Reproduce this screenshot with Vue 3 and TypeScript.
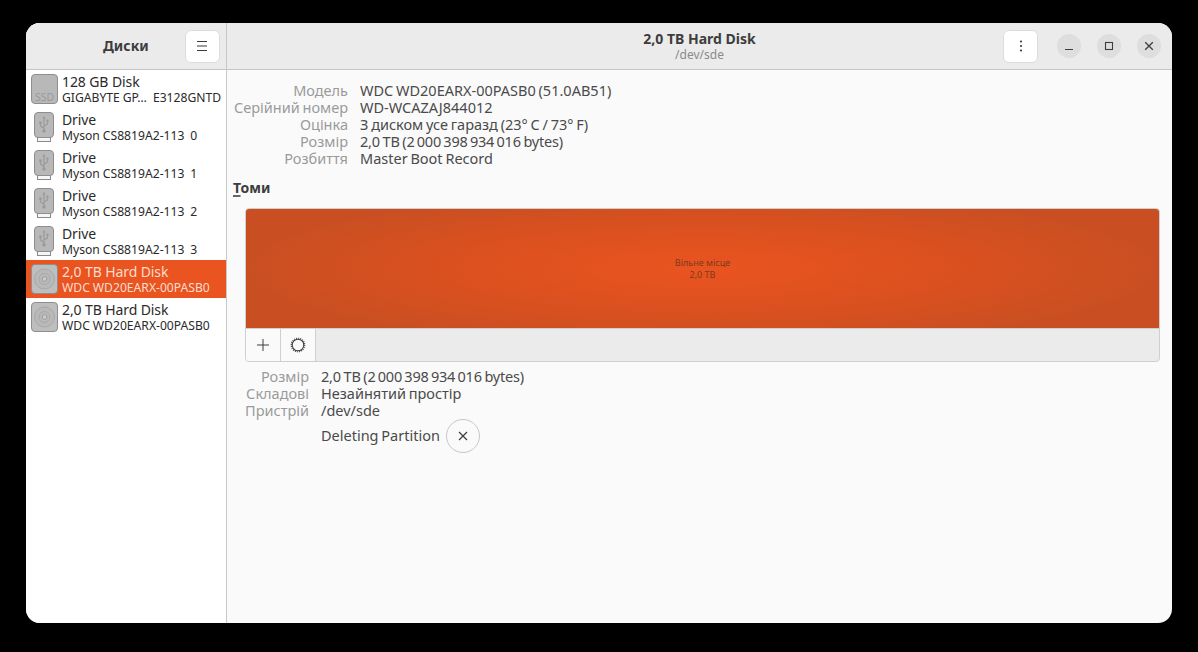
<script setup lang="ts">
interface Disk { title: string; sub: string; kind: 'ssd' | 'usb' | 'hdd'; selected?: boolean }
const disks: Disk[] = [
  { title: '128 GB Disk', sub: 'GIGABYTE GP…  E3128GNTD', kind: 'ssd' },
  { title: 'Drive', sub: 'Myson CS8819A2-113  0', kind: 'usb' },
  { title: 'Drive', sub: 'Myson CS8819A2-113  1', kind: 'usb' },
  { title: 'Drive', sub: 'Myson CS8819A2-113  2', kind: 'usb' },
  { title: 'Drive', sub: 'Myson CS8819A2-113  3', kind: 'usb' },
  { title: '2,0 TB Hard Disk', sub: 'WDC WD20EARX-00PASB0', kind: 'hdd', selected: true },
  { title: '2,0 TB Hard Disk', sub: 'WDC WD20EARX-00PASB0', kind: 'hdd' },
]
const size = '2,0 TB (2\u2009000\u2009398\u2009934\u2009016 bytes)'
const driveInfo = [
  ['Модель', 'WDC WD20EARX-00PASB0 (51.0AB51)'],
  ['Серійний номер', 'WD-WCAZAJ844012'],
  ['Оцінка', 'З диском усе гаразд (23° C / 73° F)'],
  ['Розмір', size],
  ['Розбиття', 'Master Boot Record'],
]
const volInfo = [
  ['Розмір', size],
  ['Складові', 'Незайнятий простір'],
  ['Пристрій', '/dev/sde'],
]
</script>

<template>
  <div class="stage">
    <div class="window">
      <aside class="side">
        <header class="side-head">
          <span class="side-title">Диски</span>
          <button class="btn menu-btn" aria-label="Меню">
            <svg width="16" height="16" viewBox="0 0 16 16"><path d="M3 3.5h10M3 8h10M3 12.5h10" stroke="#3d3d3d" stroke-width="1" fill="none"/></svg>
          </button>
        </header>
        <ul class="list">
          <li v-for="(d, i) in disks" :key="i" class="row" :class="{ selected: d.selected }">
            <div class="icon-slot">
              <svg v-if="d.kind === 'ssd'" width="27" height="30" viewBox="0 0 27 30">
                <rect x="0.5" y="0.5" width="26" height="29" rx="3.5" fill="#b8b8b8" stroke="#8e8e8e"/>
                <text x="13.5" y="26.5" text-anchor="middle" class="ssd-text">SSD</text>
              </svg>
              <svg v-else-if="d.kind === 'usb'" width="20" height="30" viewBox="0 0 20 30">
                <rect x="3.5" y="24" width="13" height="5.5" fill="#f6f6f6" stroke="#8a8a8a"/>
                <rect x="0.5" y="0.5" width="19" height="25" rx="3.5" fill="#b8b8b8" stroke="#8e8e8e"/>
                <path d="M10 6v13M10 16.5l-3.5-2.5V11M10 14l3.5-2V9.5" stroke="#9a9a9a" stroke-width="1.2" fill="none"/>
                <circle cx="10" cy="19" r="1.7" fill="#9a9a9a"/>
                <path d="M8.3 6.5 10 4l1.7 2.5z" fill="#9a9a9a"/>
                <rect x="5.2" y="9.5" width="2.6" height="2" fill="#9a9a9a"/>
                <circle cx="13.5" cy="8.7" r="1.2" fill="#9a9a9a"/>
              </svg>
              <svg v-else width="27" height="30" viewBox="0 0 27 30">
                <rect x="0.5" y="0.5" width="26" height="29" rx="3.5" fill="#bebebe" stroke="#8e8e8e"/>
                <circle cx="13.5" cy="15" r="10" fill="#b9b9b9" stroke="#a8a8a8"/>
                <circle cx="13.5" cy="15" r="5.5" fill="none" stroke="#a8a8a8"/>
                <circle cx="13.5" cy="15" r="2.4" fill="#cbcbcb" stroke="#9c9c9c"/>
              </svg>
            </div>
            <div class="row-text">
              <div class="row-title">{{ d.title }}</div>
              <div class="row-sub">{{ d.sub }}</div>
            </div>
          </li>
        </ul>
      </aside>

      <section class="main">
        <header class="main-head">
          <div class="head-title">
            <div class="t1">2,0 TB Hard Disk</div>
            <div class="t2">/dev/sde</div>
          </div>
          <div class="head-actions">
            <button class="btn dots-btn" aria-label="Дії">
              <svg width="16" height="16" viewBox="0 0 16 16"><g fill="#3d3d3d"><circle cx="8" cy="3.5" r="1.1"/><circle cx="8" cy="8" r="1.1"/><circle cx="8" cy="12.5" r="1.1"/></g></svg>
            </button>
            <div class="wm">
              <span class="wm-btn"><svg width="12" height="12" viewBox="0 0 12 12"><path d="M2 9.5h8" stroke="#3d3d3d" stroke-width="1.2"/></svg></span>
              <span class="wm-btn"><svg width="12" height="12" viewBox="0 0 12 12"><rect x="2.5" y="2.5" width="7" height="7" fill="none" stroke="#3d3d3d" stroke-width="1.1"/></svg></span>
              <span class="wm-btn"><svg width="12" height="12" viewBox="0 0 12 12"><path d="M2.2 2.2l7.6 7.6M9.8 2.2l-7.6 7.6" stroke="#3d3d3d" stroke-width="1.3"/></svg></span>
            </div>
          </div>
        </header>

        <div class="content">
          <dl class="info drive-info">
            <template v-for="r in driveInfo" :key="r[0]">
              <dt>{{ r[0] }}</dt><dd :class="{ tight: r[1] === size }">{{ r[1] }}</dd>
            </template>
          </dl>

          <h2 class="section"><span class="mnemonic">Т</span>оми</h2>

          <div class="volumes">
            <div class="bar">
              <span>Вільне місце</span>
              <span>2,0 TB</span>
            </div>
            <div class="toolbar">
              <button class="tool" aria-label="Додати">
                <svg width="16" height="16" viewBox="0 0 16 16"><path d="M8 2v12M2 8h12" stroke="#3d3d3d" stroke-width="1"/></svg>
              </button>
              <button class="tool" aria-label="Налаштування">
                <svg width="18" height="18" viewBox="0 0 18 18" fill="none" stroke="#3d3d3d">
                  <circle cx="9" cy="9" r="5.8" stroke-width="1.1"/>
                  <circle cx="9" cy="9" r="6.8" stroke-width="1.1" stroke-dasharray="1.1 1.03"/>
                </svg>
              </button>
            </div>
          </div>

          <dl class="info vol-info">
            <template v-for="r in volInfo" :key="r[0]">
              <dt>{{ r[0] }}</dt><dd :class="{ tight: r[1] === size }">{{ r[1] }}</dd>
            </template>
            <dt></dt>
            <dd class="job">
              <span class="job-label">Deleting Partition</span>
              <button class="cancel" aria-label="Скасувати">
                <svg width="10" height="10" viewBox="0 0 10 10"><path d="M1 1l8 8M9 1l-8 8" stroke="#3d3d3d" stroke-width="1.2"/></svg>
              </button>
            </dd>
          </dl>
        </div>
      </section>
    </div>
  </div>
</template>

<style>
html, body { margin: 0; background: #000; }
</style>

<style scoped>
.stage {
  width: 1198px;
  height: 652px;
  padding: 23px 26px 29px;
  box-sizing: border-box;
  background: #000;
  font-family: "Noto Sans", "Open Sans", sans-serif;
  color: #3d3d3d;
}
.window {
  display: flex;
  height: 600px;
  border-radius: 14px;
  overflow: hidden;
  background: #fafafa;
}
.side {
  width: 200px;
  flex: none;
  display: flex;
  flex-direction: column;
  background: #fff;
  border-right: 1px solid #c8c8c8;
}
.side-head, .main-head {
  height: 46px;
  flex: none;
  background: #ebebeb;
  border-bottom: 1px solid #c6c6c6;
  box-sizing: content-box;
}
.side-head {
  display: flex;
  align-items: center;
  padding-left: 77px;
}
.side-title { font-size: 14px; font-weight: 700; color: #3d3d3d; padding-bottom: 2px; }
.btn {
  width: 35px;
  height: 33px;
  padding: 0;
  border: 1px solid #dcdcdc;
  border-radius: 6px;
  background: #fff;
  display: grid;
  place-items: center;
}
.menu-btn { margin-left: 36px; }
.list { list-style: none; margin: 0; padding: 0; }
.row {
  height: 38px;
  display: flex;
  align-items: center;
  color: #2a2a2a;
}
.row.selected { background: #e95420; color: #fbdccd; }
.icon-slot { width: 36px; display: flex; justify-content: center; flex: none; }
.row-title { font-size: 14px; line-height: 17px; letter-spacing: -0.1px; }
.row-sub { font-size: 12.15px; line-height: 15px; white-space: pre; word-spacing: -0.2px; }
.ssd-text { font-size: 10.5px; fill: #9a9a9a; font-family: "Noto Sans", sans-serif; }
.main { flex: 1; display: flex; flex-direction: column; min-width: 0; }
.main-head { display: flex; align-items: center; position: relative; justify-content: flex-end; }
.head-title { position: absolute; left: 0; right: 0; text-align: center; }
.t1 { font-size: 14px; font-weight: 700; line-height: 17px; margin-top: -1px; }
.t2 { font-size: 12px; line-height: 15px; color: #8a8a8a; }
.head-actions { display: flex; align-items: center; position: relative; padding-right: 11px; }
.wm { display: flex; gap: 16px; margin-left: 19px; }
.wm-btn {
  width: 24px; height: 24px; border-radius: 50%;
  background: #dedede; display: grid; place-items: center;
}
.content { padding: 12px 12px 0 6px; }
.info { display: grid; margin: 0; font-size: 14.5px; line-height: 17px; column-gap: 12px; word-spacing: -1px; }
.info dt { text-align: right; color: #9a9a9a; white-space: nowrap; }
.info dd { margin: 0; color: #4a4a4a; }
.info dd.tight { letter-spacing: -0.18px; }
.drive-info { grid-template-columns: 115px 1fr; }
.section { margin: 12px 0 12px; font-size: 14px; line-height: 17px; font-weight: 700; color: #3d3d3d; }
.mnemonic { text-decoration: underline; text-decoration-thickness: 2px; text-underline-offset: 2px; text-decoration-color: #666; }
.volumes {
  margin-left: 12px;
  border: 1px solid #cfcfcf;
  border-radius: 4px;
  overflow: hidden;
  background: #ebebeb;
}
.bar {
  height: 119px;
  box-sizing: border-box;
  display: flex;
  flex-direction: column;
  align-items: center;
  justify-content: center;
  font-size: 9px;
  line-height: 12px;
  color: #7d3a1f;
  background: radial-gradient(ellipse 50% 65% at 50% 50%, #ea5420 0%, #d9501f 60%, #c94f22 100%);
}
.toolbar { display: flex; height: 32px; border-top: 1px solid #cfcfcf; }
.tool {
  width: 35px; padding: 0; border: 0; border-right: 1px solid #cfcfcf;
  background: #fafafa; display: grid; place-items: center;
}
.vol-info { grid-template-columns: 64px 1fr; margin: 6px 0 0 12px; }
.job { display: flex; align-items: center; gap: 6px; height: 34px; }
.job-label { padding-bottom: 2px; }
.cancel {
  width: 34px; height: 34px; border-radius: 50%; padding: 0;
  border: 1px solid #c8c8c8; background: #fafafa;
  display: grid; place-items: center;
}
</style>
